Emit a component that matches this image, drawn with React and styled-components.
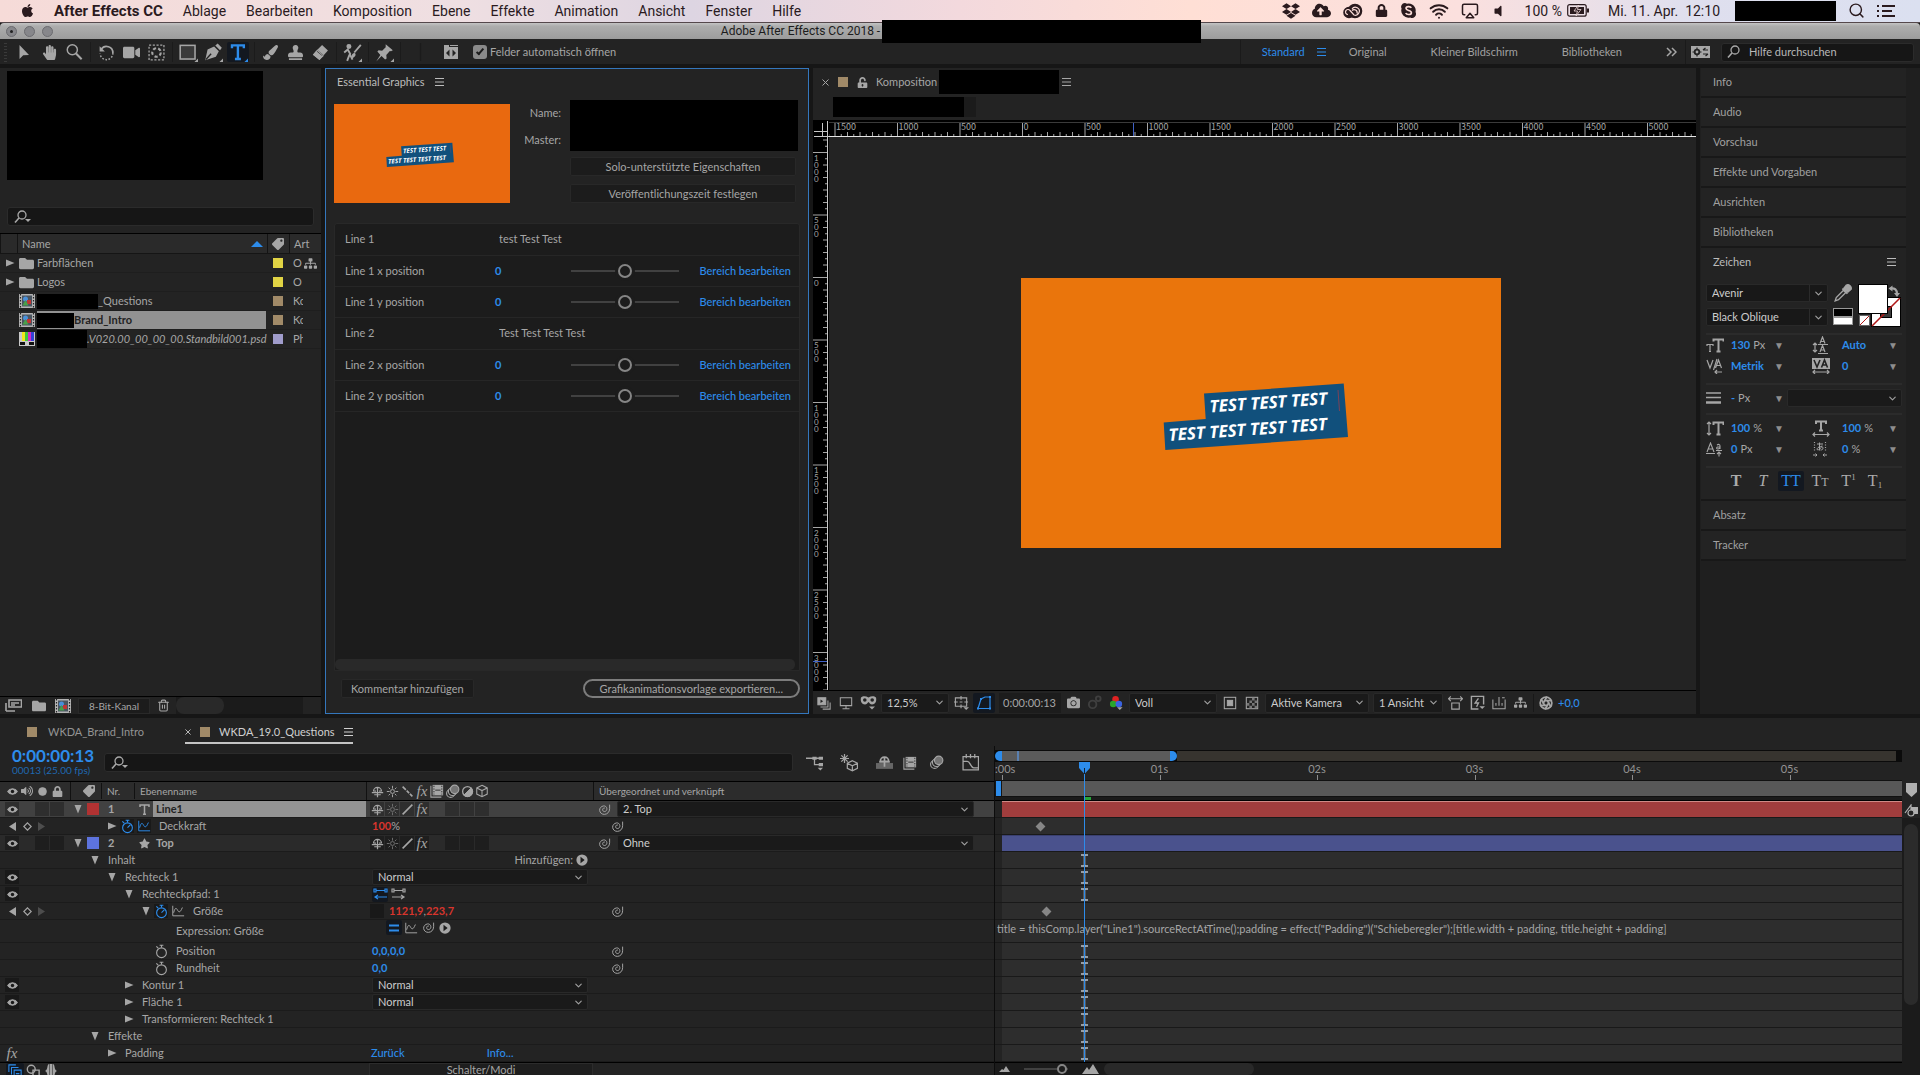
import React from 'react';
import styled, { createGlobalStyle, css } from 'styled-components';
import {
  FaApple, FaDropbox, FaSkype, FaLock, FaUnlockAlt, FaVolumeUp, FaVolumeOff, FaTag, FaFolder,
  FaPaintBrush, FaEraser, FaHandPaper, FaCamera, FaStar, FaCloudUploadAlt,
  FaSitemap, FaStamp, FaVideo,
} from 'react-icons/fa';
import { ChevronDown, Search, Wifi, Airplay, Trash2, Aperture } from 'lucide-react';

const UI = 'Lato, "Open Sans", sans-serif';
const MAC = 'Roboto, "Liberation Sans", sans-serif';
const BLUE = '#2d8ceb';

const GlobalStyle = createGlobalStyle`
  *, *::before, *::after {
    box-sizing: border-box;
  }

  body {
    margin: 0;
    background: #161616;
    overflow: hidden;
  }

  button, input, select {
    font: inherit;
    color: inherit;
    margin: 0;
    padding: 0;
    border: none;
    background: none;
    outline: none;
  }

  svg {
    display: block;
    flex: none;
  }
`;

/* ---------- drawings ---------- */

const Glyph = ({ size = 16, w, h, box = '0 0 16 16', children, ...rest }) => (
  <svg
    width={w || size}
    height={h || size}
    viewBox={box}
    fill="none"
    stroke="currentColor"
    strokeWidth="1.2"
    aria-hidden="true"
    {...rest}
  >
    {children}
  </svg>
);

const Burger = () => (
  <Glyph w={9} h={8} box="0 0 9 8">
    <path d="M0 .5h9M0 4h9M0 7.5h9" strokeWidth="1" />
  </Glyph>
);

const Spiral = ({ size = 13 }) => (
  <Glyph size={size}>
    <path d="M8.500 6.300c-1.200-.6-2.800.3-2.800 2 0 1.500 1.200 2.300 2.500 2.200 1.800-.2 2.900-1.800 2.700-3.600C10.700 4.700 8.800 3.300 6.800 3.600 4 4 1.800 6.300 2 9c.2 3 2.900 5.200 6 5 3.600-.2 6.300-3 6.300-7V2" strokeWidth="1.200" />
  </Glyph>
);

const Stopwatch = () => (
  <Glyph size={15}>
    <circle cx="8" cy="9.300" r="5.200" />
    <path d="M6 1.300h4M8 1.300v2.500M2.500 2.500l2 2" />
  </Glyph>
);

const StopwatchOn = () => (
  <Glyph size={15}>
    <circle cx="8" cy="9.300" r="5.200" />
    <path d="M6 1.300h4M8 1.300v2.500M2.500 2.500l2 2M8 9.300l3-3" />
  </Glyph>
);

const Graph = () => (
  <Glyph size={14}>
    <path d="M2 2v11.500h13M3 10c1.500-6 3-6 4.500-3s3 3 5.500-3" strokeWidth="1.100" />
  </Glyph>
);

const Eye = () => (
  <Glyph w={11} h={9} box="0 0 12 10">
    <path d="M.7 5C3.200 1 8.800 1 11.300 5 8.800 9 3.200 9 .7 5z" fill="currentColor" />
    <circle cx="6" cy="5" r="1.900" fill="#1a1a1a" stroke="none" />
  </Glyph>
);

const Shy = () => (
  <Glyph size={13}>
    <path d="M3 8a5 5 0 0 1 10 0M1 9.500h14M8 3v12M5 6.500v3M11 6.500v3M4 12h8" strokeWidth="1.500" />
  </Glyph>
);

const Sun = () => (
  <Glyph size={13}>
    <circle cx="8" cy="8" r="2.400" />
    <path d="M8 1v3.500M8 11.500V15M1 8h3.500M11.500 8H15M3.200 3.200l2 2M10.800 10.800l2 2M12.800 3.200l-2 2M5.200 10.800l-2 2" />
  </Glyph>
);

const Slash = () => (
  <Glyph size={13}>
    <path d="M2 14L14 2" strokeWidth="2" />
  </Glyph>
);

const Dashes = () => (
  <Glyph size={13}>
    <path d="M2 2l4 4M7 7l3 3M11 11l3 3" strokeWidth="2" />
  </Glyph>
);

const Film = () => (
  <Glyph size={14}>
    <path d="M1 2v13h12" />
    <rect x="3" y="1" width="12" height="12" fill="currentColor" stroke="none" />
    <path d="M4.500 2v10M13.500 2v10" stroke="#232323" strokeWidth="1" strokeDasharray="1.500 1.500" />
    <path d="M6 7h6" stroke="#232323" strokeWidth="1" />
  </Glyph>
);

const Blur = () => (
  <Glyph size={15}>
    <circle cx="6" cy="10" r="4.300" />
    <circle cx="8" cy="8" r="4.300" fill="#232323" />
    <circle cx="10.300" cy="5.700" r="4.500" fill="#757575" />
  </Glyph>
);

const HalfCircle = () => (
  <Glyph size={13}>
    <circle cx="8" cy="8" r="6" strokeWidth="1.600" />
    <path d="M3.500 12.500l9-9a6.300 6.300 0 0 1-9 9z" fill="currentColor" />
  </Glyph>
);

const Cube = () => (
  <Glyph size={14}>
    <path d="M8 1.500l6 3v7l-6 3-6-3v-7zM2 4.500l6 3 6-3M8 7.500v7" />
  </Glyph>
);

const PlayDot = () => (
  <Glyph size={12}>
    <circle cx="8" cy="8" r="7.500" fill="currentColor" stroke="none" />
    <path d="M6 3.800v8.400L11.500 8z" fill="#1c1c1c" stroke="none" />
  </Glyph>
);

const Tri = ({ open }) => (
  <Glyph w={10} h={10} box="0 0 10 10">
    <path d={open ? 'M1.500 1h7L5 9.500z' : 'M1 1.500v7L9.500 5z'} fill="currentColor" stroke="none" />
  </Glyph>
);

const CompIcon = () => (
  <Glyph w={16} h={14} box="0 0 16 14">
    <rect width="16" height="14" fill="#b4b4b4" stroke="none" />
    <path d="M1.500 0v14M14.500 0v14" stroke="#222" strokeDasharray="1.500 1.500" />
    <rect x="3" y="1.500" width="10" height="11" fill="#4a5560" stroke="none" />
    <circle cx="6.500" cy="5" r="2.500" fill="#4a8fd8" stroke="none" />
    <rect x="8" y="6" width="4" height="4" fill="#c03434" stroke="none" />
    <path d="M6.500 6l3 5.500h-6z" fill="#49a04a" stroke="none" />
  </Glyph>
);

const BarsIcon = () => (
  <Glyph w={16} h={14} box="0 0 16 14" stroke="none">
    <rect width="16" height="14" fill="#c8c8c8" />
    <rect x="3" width="3" height="9" fill="#f1e51b" />
    <rect x="6" width="3" height="9" fill="#3fc63f" />
    <rect x="9" width="3" height="9" fill="#d529c9" />
    <rect x="12" width="3" height="9" fill="#3442d6" />
    <rect x="1" y="10" width="5" height="3" fill="#111" />
    <rect x="10" y="10" width="5" height="3" fill="#111" />
  </Glyph>
);

const Magnifier = ({ caret }) => (
  <Glyph w={18} h={14} box="0 0 18 14">
    <circle cx="8" cy="5" r="4" strokeWidth="1.300" />
    <path d="M5 8l-4 4.500" strokeWidth="1.600" />
    {caret && <path d="M11 9h6l-3 3z" fill="currentColor" stroke="none" />}
  </Glyph>
);

const Interpret = () => (
  <Glyph w={17} h={13} box="0 0 17 13">
    <path d="M4 1h12.500v7H4zM1 4v8M1 12h9M6 4h8M6 6h4" strokeWidth="1.600" />
  </Glyph>
);

const Artwork = () => (
  <svg width="100%" height="100%" viewBox="0 0 480 270" role="img" aria-label="Vorschau">
    <path d="M183 115.500L322.700 105.500 327 159 144.300 172 142.700 144.500 184.700 141z" fill="#11507c" />
    <g fill="#fff" fontFamily='"Noto Sans", sans-serif' fontWeight="700" fontStyle="italic" fontSize="17">
      <text transform="translate(189 134.500) rotate(-4)">TEST TEST TEST</text>
      <text transform="translate(148 163) rotate(-4)">TEST TEST TEST TEST</text>
    </g>
    <path d="M317 112l1.500 21" stroke="#7b4257" strokeWidth="1" />
  </svg>
);

const HorizontalRuler = () => {
  const zero = 193.5;
  const ticks = Array.from({ length: 140 }, (_, i) => i - 31);
  return (
    <svg width="100%" height="16" fontFamily='"Noto Sans CJK SC", sans-serif' fontSize="9" fill="#a6a6a6">
      <path d="M0 1.500h2000" stroke="#3a3a3a" />
      {ticks.map((i) => (
        <path
          key={i}
          d={`M${zero + i * 6.25} 16v-${i % 10 === 0 ? 14 : i % 2 === 0 ? 5 : 3}`}
          stroke="#a6a6a6"
        />
      ))}
      {ticks.filter((i) => i % 10 === 0).map((i) => (
        <text key={i} x={zero + 1 + i * 6.25} y="9">{Math.abs(i * 50)}</text>
      ))}
      <path d="M304.500 2v14" stroke="#3f61c8" />
      <path d="M0 15.500h2000" stroke="#e6e6e6" />
    </svg>
  );
};

const VerticalRuler = () => {
  const zero = 140.5;
  const ticks = Array.from({ length: 92 }, (_, i) => i - 22);
  return (
    <svg width="16" height="100%" fontFamily={UI} fontSize="8" fill="#a6a6a6">
      {ticks.map((i) => (
        <path
          key={i}
          d={`M15 ${zero + i * 6.25}h-${i % 10 === 0 ? 15 : i % 2 === 0 ? 5 : 3}`}
          stroke="#a6a6a6"
        />
      ))}
      {ticks.filter((i) => i % 10 === 0).map((i) => (
        <text key={i}>
          {String(Math.abs(i * 50)).split('').map((digit, n) => (
            <tspan key={n} x="1" y={zero + 8 + i * 6.25 + n * 7}>{digit}</tspan>
          ))}
        </text>
      ))}
      <path d="M0 524.500h15" stroke="#3f61c8" />
      <path d="M14.500 0v2000" stroke="#c9c9c9" />
    </svg>
  );
};

/* ---------- shared parts ---------- */

const Screen = styled.div`
  height: 100vh;
  display: flex;
  flex-direction: column;
  background: #161616;
  color: #a6a6a6;
  font-family: ${UI};
  font-size: 11px;
  line-height: 16px;
  white-space: nowrap;
`;

const Redacted = styled.span`
  display: block;
  flex: none;
  background: #000;
  width: ${(p) => p.$w}px;
  height: ${(p) => p.$h}px;
`;

const Swatch = styled.span`
  display: block;
  flex: none;
  width: ${(p) => p.$size || 10}px;
  height: ${(p) => p.$size || 10}px;
  background: ${(p) => p.$color};
`;

const SearchBox = styled.label`
  display: flex;
  align-items: center;
  gap: 4px;
  height: 19px;
  padding: 0 6px;
  color: #a8a8a8;
  background: #161616;
  border: 1px solid #2b2b2b;
  border-radius: 3px;

  input {
    flex: 1;
    min-width: 0;
  }

  input::placeholder {
    color: #b8b8b8;
    opacity: 1;
  }
`;

const IconButton = styled.button`
  display: flex;
  flex: none;
  align-items: center;
  justify-content: center;
  width: ${(p) => p.$w || 22}px;
  height: ${(p) => p.$h || 20}px;
  color: ${(p) => (p.$active ? BLUE : 'inherit')};
  background: ${(p) => (p.$active ? '#131820' : 'none')};
  border-radius: 2px;
`;

const HotText = styled.button`
  color: ${(p) => (p.$expression ? '#d8352d' : BLUE)};
  font-weight: ${(p) => (p.$strong ? 700 : 500)};
  text-align: left;
`;

const SelectWrap = styled.span`
  display: flex;
  flex: ${(p) => (p.$w ? 'none' : 1)};
  align-items: center;
  width: ${(p) => (p.$w ? `${p.$w}px` : 'auto')};
  height: ${(p) => p.$h || 18}px;
  padding-right: 3px;
  color: #cccccc;
  background: ${(p) => (p.$split
    ? 'linear-gradient(#2b2b2b, #2b2b2b) calc(100% - 17px) 0 / 1px 100% no-repeat #181818'
    : '#1a1a1a')};
  border: 1px solid #292929;
  border-radius: 2px;

  select {
    flex: 1;
    min-width: 0;
    height: 100%;
    padding-left: 5px;
    appearance: none;
    line-height: 14px;
  }
`;

const Select = ({ label, value, w, h, split }) => (
  <SelectWrap $w={w} $h={h} $split={split}>
    <select aria-label={label} defaultValue={value}>
      <option value={value}>{value}</option>
    </select>
    <ChevronDown size={11} color="#a0a0a0" strokeWidth={2.5} />
  </SelectWrap>
);

/* ---------- system menu and window title ---------- */

const MenuBar = styled.header`
  display: flex;
  align-items: center;
  flex: none;
  height: 23px;
  padding: 0 25px 1px 20px;
  color: #2a1a1e;
  font-family: ${MAC};
  font-size: 14px;
  border-bottom: 1px solid #55484c;
  background: linear-gradient(90deg, #f6dbd8 0%, #efdfe2 24%, #ddd5e2 36%, #f3d9dd 50%, #ffdfd5 62%, #fbe0de 76%, #dfdfee 88%, #dbe0f0 100%);
`;

const MenuList = styled.nav`
  display: flex;
  gap: 20px;
  flex: 1;
  margin-left: 19px;
`;

const MenuLink = styled.a`
  color: inherit;
  text-decoration: none;
  font-size: ${(p) => (p.$app ? 15 : 14)}px;
  font-weight: ${(p) => (p.$app ? 700 : 400)};
`;

const StatusIcons = styled.div`
  display: flex;
  align-items: center;
  gap: 12px;
`;

const Battery = styled.span`
  display: flex;
  align-items: center;
  gap: 5px;
  margin-left: 8px;
`;

const Clock = styled.span`
  margin: 0 3px 0 6px;
  white-space: pre;
`;

const TitleBar = styled.div`
  position: relative;
  display: flex;
  align-items: center;
  flex: none;
  height: 16px;
  padding-left: 6px;
  background: linear-gradient(#c4c4c4, #adadad 20%, #9c9c9c);
  border-radius: 4px 4px 0 0;
`;

const TrafficLight = styled.button`
  display: flex;
  align-items: center;
  justify-content: center;
  width: 11px;
  height: 11px;
  margin-right: 7px;
  border: 1px solid #6c6c70;
  border-radius: 50%;
  background: #87878b;

  &:first-child::after {
    content: '';
    width: 3px;
    height: 3px;
    border-radius: 50%;
    background: #222;
  }
`;

const WindowTitle = styled.div`
  display: flex;
  flex: 1;
  justify-content: center;
  align-items: center;
  height: 16px;
  color: #1c1c1c;
  font-family: ${MAC};
  font-size: 12px;
  gap: 2px;
  margin-right: 58px;
`;

const TitleRedaction = styled(Redacted)`
  position: relative;
  z-index: 2;
`;

/* ---------- toolbar ---------- */

const Toolbar = styled.div`
  display: flex;
  align-items: center;
  flex: none;
  height: 25px;
  padding: 1px 6px 0 4px;
  background: #232323;
  color: #a6a6a6;
`;

const Grip = styled.span`
  width: 3px;
  height: 19px;
  margin-right: 2px;
  background: repeating-linear-gradient(#3a3a3a 0 1px, transparent 1px 3px);
`;

const ToolGroup = styled.div`
  display: flex;
  gap: 3px;
  padding: 0 5px 0 4px;
  border-right: 1px solid #1b1b1b;
`;

const AutoOpen = styled.label`
  display: flex;
  align-items: center;
  gap: 3px;
  flex: 1;
  margin-left: 12px;

  input {
    display: grid;
    place-items: center;
    width: 14px;
    height: 14px;
    appearance: none;
    background: #8a8a8a;
    border-radius: 3px;
  }

  input:checked::after {
    content: '';
    width: 4px;
    height: 8px;
    margin-bottom: 2px;
    border: solid #1c1c1c;
    border-width: 0 2px 2px 0;
    transform: rotate(40deg);
  }
`;

const Workspaces = styled.nav`
  display: flex;
  align-items: center;
  gap: 44px;
  height: 24px;
  padding: 0 9px 0 21px;
  border-left: 1px solid #1a1a1a;
  border-right: 1px solid #1a1a1a;
`;

const Workspace = styled.button`
  display: flex;
  align-items: center;
  gap: 12px;
  margin-right: ${(p) => (p.$active ? '-21px' : 0)};
  color: ${(p) => (p.$active ? BLUE : '#a0a0a0')};
`;

const HelpSearch = styled(SearchBox)`
  width: 193px;
  margin-left: 6px;
  padding: 0 5px;
  gap: 4px;
`;

/* ---------- panels ---------- */

const Panels = styled.main`
  display: grid;
  grid-template-columns: 321px 484px minmax(0, 1fr) 220px;
  gap: 0 4px;
  flex: 1;
  min-height: 0;
  padding: 4px 0;
`;

const Panel = styled.section`
  display: flex;
  flex-direction: column;
  min-width: 0;
  min-height: 0;
  background: #232323;
`;

const ProjectTop = styled.div`
  padding: 3px 7px 7px;

  ${SearchBox} {
    margin-top: 27px;
  }
`;

const ProjectTable = styled.table`
  width: 100%;
  table-layout: fixed;
  border-collapse: collapse;

  th {
    height: 20px;
    padding: 0 0 0 5px;
    text-align: left;
    font-weight: 400;
    background: #2a2a2a;
    border-top: 1px solid #000;
    border-bottom: 1px solid #151515;
    box-shadow: inset 1px 0 #141414;
  }

  td {
    height: 19px;
    padding: 0;
    overflow: hidden;
    border-bottom: 1px solid #1e1e1e;
  }
`;

const HeadCell = styled.span`
  display: flex;
  align-items: center;
  justify-content: space-between;
  padding-right: 4px;
`;

const ItemName = styled.span`
  display: flex;
  align-items: center;
  gap: ${(p) => (p.$folder ? 3 : 2)}px;
  height: 18px;
  padding-left: 2px;
`;

const ItemLabel = styled.span`
  display: flex;
  flex: 1;
  align-items: center;
  height: 18px;
  margin-right: 1px;
  font-style: ${(p) => (p.$italic ? 'italic' : 'normal')};
  ${(p) => p.$selected && css`
    background: #929292;
    color: #232323;
    font-weight: 700;
  `}
`;

const KindCell = styled.span`
  display: flex;
  align-items: center;
  gap: 2px;
  width: ${(p) => (p.$wide ? 28 : 10)}px;
  padding-left: ${(p) => (p.$wide ? 4 : 0)}px;
  margin-left: ${(p) => (p.$wide ? 0 : 4)}px;
  overflow: hidden;
`;

const PanelFooter = styled.footer`
  display: flex;
  align-items: center;
  flex: none;
  height: ${(p) => p.$h}px;
  margin-top: auto;
  border-top: 1px solid #000;
  color: #a6a6a6;
`;

const DepthButton = styled.button`
  width: 72px;
  height: 16px;
  margin-left: 2px;
  font-size: 10px;
  line-height: 14px;
  background: #1c1c1c;
  border: 1px solid #292929;
`;

const ScrollTrack = styled.span`
  flex: ${(p) => (p.$w ? 'none' : 1)};
  width: ${(p) => (p.$w ? `${p.$w}px` : 'auto')};
  height: 100%;
  background: #1b1b1b;

  &::before {
    content: '';
    display: block;
    width: ${(p) => p.$thumb}px;
    height: 100%;
    border-radius: 8px;
    background: #292929;
  }
`;

const FocusedPanel = styled(Panel)`
  border: 1px solid #3477bd;
  padding: 0 8px;
`;

const PanelTitle = styled.h2`
  display: flex;
  align-items: center;
  gap: 10px;
  margin: 0;
  height: 26px;
  padding-left: 3px;
  color: #bcbcbc;
  font-size: 11px;
  font-weight: 400;
`;

const TemplateHead = styled.div`
  display: grid;
  grid-template-columns: 176px 1fr 228px;
  gap: 0 9px;
  padding: 5px 2px 0 0;
  height: 114px;
`;

const Thumbnail = styled.div`
  height: 99px;
  margin-top: 4px;
  background: #e9690f;
`;

const FieldLabels = styled.div`
  display: flex;
  flex-direction: column;
  align-items: flex-end;
  gap: 11px;
  padding-top: 5px;
`;

const FieldStack = styled.div`
  display: flex;
  flex-direction: column;
  gap: 8px;

  ${Redacted} {
    margin-bottom: -2px;
  }
`;

const FlatButton = styled.button`
  height: 19px;
  padding: 0 9px;
  line-height: 16px;
  color: #a6a6a6;
  background: #1c1c1c;
  border: 1px solid #282828;
  border-radius: 2px;
  margin-right: ${(p) => (p.$inset ? 2 : 0)}px;
`;

const PropertyList = styled.div`
  display: flex;
  flex-direction: column;
  flex: 1;
  margin-top: 14px;
  background: #1c1c1c;
  border: 1px solid #282828;
  border-radius: 3px 3px 0 0;
`;

const Property = styled.div`
  display: grid;
  grid-template-columns: 150px 76px 108px 1fr;
  align-items: center;
  height: ${(p) => (p.$text ? 32 : 31)}px;
  padding: 0 8px ${(p) => (p.$text ? 2 : 0)}px 10px;
  border-bottom: 1px solid #262626;

  > button:last-child {
    justify-self: end;
  }
`;

const TextField = styled.input`
  grid-column: 2 / 4;
  padding-left: 4px;
`;

const Slider = styled.input.attrs({ type: 'range' })`
  width: ${(p) => p.$w}px;
  height: ${(p) => p.$thumb + 2}px;
  appearance: none;

  &::-webkit-slider-runnable-track {
    height: 2px;
    background: #414141;
  }

  &::-webkit-slider-thumb {
    appearance: none;
    width: ${(p) => p.$thumb}px;
    height: ${(p) => p.$thumb}px;
    margin-top: ${(p) => 1 - p.$thumb / 2}px;
    border: 2px solid #858585;
    border-radius: 50%;
    background: #1c1c1c;
    box-shadow: 0 0 0 ${(p) => (p.$thumb > 10 ? 3 : 0)}px #1c1c1c;
  }
`;

const ListScroll = styled.span`
  height: 11px;
  margin: auto 4px 0 0;
  border-radius: 5px;
  background: #292929;
`;

const TemplateActions = styled.div`
  display: flex;
  justify-content: space-between;
  align-items: center;
  padding: 8px 0 15px 7px;
`;

const PillButton = styled.button`
  height: 19px;
  padding: 0 15px;
  line-height: 15px;
  color: #a6a6a6;
  border: 2px solid #7c7c7c;
  border-radius: 10px;
`;

/* ---------- composition viewer ---------- */

const CompHead = styled.div`
  display: flex;
  align-items: center;
  height: 28px;
  padding: 0 9px;

  > * {
    margin-right: 3px;
  }

  ${Swatch} {
    margin: 0 9px 0 6px;
  }

  > span {
    margin-left: 5px;
  }

  > ${Redacted} {
    margin-left: -1px;
  }
`;

const Breadcrumb = styled.div`
  display: flex;
  height: 24px;
  padding: 1px 20px 3px;

  &::after {
    content: '';
    width: 12px;
    background: #1b1b1b;
  }
`;

const Viewer = styled.div`
  display: grid;
  grid-template: 16px minmax(0, 1fr) / 16px minmax(0, 1fr);
  flex: 1;
  min-height: 0;
  overflow: hidden;
  border-top: 1px solid #000;
`;

const RulerStrip = styled.div`
  min-width: 0;
  min-height: 0;
  overflow: hidden;
  background: #000;
`;

const Stage = styled.div`
  display: flex;
  align-items: center;
  justify-content: center;
  padding: 0 3px 2px 0;
  overflow: hidden;
`;

const Frame = styled.div`
  width: 480px;
  height: 270px;
  background: #ea750c;
`;

const CompFooter = styled(PanelFooter)`
  gap: 4px;
  padding: 0 2px;
`;

const TimeReadout = styled.span`
  width: 62px;
  padding-left: 4px;
  line-height: 20px;
  background: #1c1c1c;
`;

const Divider = styled.span`
  width: 1px;
  height: 18px;
  background: #181818;
`;

/* ---------- right column ---------- */

const SideColumn = styled.aside`
  padding: 0 14px 0 1px;
  background: #1f1f1f;
  min-height: 0;
`;

const Drawer = styled.h2`
  display: flex;
  align-items: center;
  justify-content: space-between;
  margin: 0;
  height: 30px;
  padding: 0 10px ${(p) => (p.$open ? 3 : 1)}px 12px;
  font-size: 11px;
  font-weight: 400;
  color: ${(p) => (p.$open ? '#bcbcbc' : '#a0a0a0')};
  background: #232323;
  border-bottom: ${(p) => (p.$open ? 'none' : '2px solid #181818')};
`;

const CharacterBody = styled.div`
  padding: 6px 4px 0 5px;
  background: #232323;
  border-bottom: 2px solid #181818;
`;

const FontPickers = styled.div`
  display: grid;
  grid-template-columns: 122px 20px 44px;
  gap: 6px 5px;
  height: 49px;
`;

const PickerColumn = styled.div`
  display: flex;
  flex-direction: column;
  align-items: center;
  gap: 6px;
`;

const MetricGrid = styled.div`
  display: grid;
  grid-template-columns: 25px 37px 44px 30px 37px 1fr;
  grid-auto-rows: 16px;
  align-items: center;
  row-gap: 5px;
  padding: ${(p) => p.$top}px 3px 9px 0;
  border-top: 2px solid #2b2b2b;
`;

const Unit = styled.span`
  display: flex;
  gap: 3px;
`;

const Caret = styled.button`
  width: 12px;
  justify-self: ${(p) => (p.$end ? 'end' : 'start')};
  margin-left: ${(p) => (p.$end ? 0 : 5)}px;
  font-size: 10px;
  color: #8e8e8e;
`;

const StrokeRow = styled.div`
  display: grid;
  grid-template-columns: 25px 37px 19px 1fr;
  align-items: center;
  height: 30px;
  padding-bottom: 2px;
  border-top: 2px solid #2b2b2b;
`;

const StyleRow = styled.div`
  display: flex;
  justify-content: center;
  gap: 3px;
  height: 33px;
  padding: 3px 0 0 2px;
  border-top: 2px solid #2b2b2b;
`;

const StyleButton = styled(IconButton)`
  font-family: "Liberation Serif", serif;
  font-size: 16px;
  font-weight: ${(p) => (p.$light ? 400 : 700)};
  font-style: ${(p) => (p.$italic ? 'italic' : 'normal')};
  color: ${(p) => (p.$active ? BLUE : '#ababab')};

  small {
    font-size: ${(p) => (p.$script ? 9 : 12)}px;
    align-self: ${(p) => p.$script || 'flex-end'};
    line-height: ${(p) => (p.$script ? 12 : 18)}px;
  }
`;

/* ---------- timeline ---------- */

const TimelinePanel = styled.section`
  display: flex;
  flex-direction: column;
  flex: none;
  background: #232323;
`;

const Tabs = styled.div`
  display: flex;
  height: 28px;
  padding-left: 27px;
  gap: 41px;
`;

const Tab = styled.button`
  display: flex;
  align-items: center;
  gap: ${(p) => (p.$active ? 9 : 11)}px;
  height: 26px;
  padding-top: 3px;
  color: ${(p) => (p.$active ? '#d0d0d0' : '#949494')};
  border-bottom: 2px solid ${(p) => (p.$active ? '#c4c4c4' : 'transparent')};
`;

const TimelineBody = styled.div`
  display: grid;
  grid-template-columns: 995px minmax(0, 1fr) 18px;
`;

const LayerPane = styled.div`
  border-right: 1px solid #0c0c0c;
`;

const LayerTools = styled.div`
  display: flex;
  align-items: center;
  height: 35px;
  padding: 0 12px 2px 12px;
  color: #a6a6a6;

  ${SearchBox} {
    flex: 1;
    margin: 0 8px 0 13px;
  }
`;

const CurrentTime = styled.div`
  width: 79px;
  color: ${BLUE};
  font-size: 17px;
  font-weight: 700;
  line-height: 16px;

  small {
    display: block;
    color: #1f68b0;
    font-size: 10px;
    font-weight: 400;
    line-height: 13px;
  }
`;

const ToolIcons = styled.div`
  display: flex;
  gap: ${(p) => p.$gap || 0}px;
`;

const rowGrid = css`
  display: grid;
  grid-template-columns: 70px 296px 227px 1fr;
  align-items: stretch;
`;

const ColumnHead = styled.div`
  ${rowGrid}
  height: 20px;
  font-size: 10px;
  color: #a6a6a6;
  background: #2c2c2c;
  border-top: 1px solid #000;
  border-bottom: 1px solid #000;

  > * + * {
    box-shadow: inset 1px 0 #111;
  }
`;

const Flags = styled.span`
  display: flex;
  align-items: center;
  gap: 1px;
  padding-left: 5px;
`;

const Cell = styled.span`
  display: flex;
  align-items: center;
  justify-content: center;
  flex: none;
  width: 14px;
  height: 14px;
  color: ${(p) => p.$color || '#a6a6a6'};
  background: ${(p) => (p.$box ? 'rgba(0, 0, 0, 0.28)' : 'none')};
`;

const HeadOutline = styled.span`
  display: grid;
  grid-template-columns: 31px 33px 1fr;
  align-items: center;

  > svg {
    margin-left: 13px;
  }

  > span {
    padding-left: 6px;
    box-shadow: inset 1px 0 #111;
  }
`;

const ParentHead = styled.span`
  padding-left: 6px;
  line-height: 18px;
`;

const LayerRow = styled.div`
  ${rowGrid}
  height: ${(p) => (p.$tall ? 23 : 17)}px;
  border-bottom: 1px solid #1b1b1b;
  background: ${(p) => (p.$selected ? '#414141' : p.$layer ? '#2a2a2a' : '#232323')};
`;

const Outline = styled.span`
  display: flex;
  align-items: center;
  padding-left: ${(p) => 3 + p.$level * 17}px;
`;

const OutlineName = styled.span`
  padding-left: ${(p) => p.$gap}px;
`;

const Animators = styled.span`
  display: flex;
  gap: 3px;
  margin-left: ${(p) => (p.$leaf ? 13 : 3)}px;
`;

const LayerNumber = styled.span`
  width: 31px;
  margin-left: 9px;
  font-weight: 700;
`;

const LayerName = styled.span`
  flex: 1;
  height: 16px;
  margin-left: 3px;
  padding-left: 3px;
  font-weight: 700;
  ${(p) => p.$selected && css`
    color: #232323;
    background: #939393;
  `}
`;

const Values = styled.span`
  display: flex;
  align-items: ${(p) => (p.$top ? 'flex-start' : 'center')};
  gap: ${(p) => p.$gap || 0}px;
  padding-left: ${(p) => p.$pad || 6}px;
  padding-right: 5px;
`;

const AddMenu = styled.button`
  display: flex;
  align-items: center;
  gap: 3px;
  margin-left: auto;
`;

const Parent = styled.span`
  display: flex;
  align-items: center;
  gap: 6px;
  padding: 0 20px 0 ${(p) => (p.$layer ? 5 : 18)}px;
`;

const LayerFooter = styled.div`
  display: flex;
  align-items: flex-start;
  height: 13px;
  padding-left: 6px;
  overflow: hidden;
  border-top: 1px solid #000;
  color: #a6a6a6;
`;

const ModeButton = styled.button`
  width: 224px;
  height: 16px;
  margin-left: 309px;
  padding-bottom: 2px;
  line-height: 12px;
  background: #1e1e1e;
  border: 1px solid #2c2c2c;
`;

const TrackPane = styled.div`
  position: relative;
  padding-top: 4px;
  overflow: hidden;
`;

const Navigator = styled.div`
  display: flex;
  height: 12px;
  padding: 1px 6px 1px 0;
  background: #0b0b0b;
`;

const NavHandle = styled.span`
  width: 7px;
  background: ${BLUE};
  border-radius: ${(p) => (p.$end ? '0 5px 5px 0' : '5px 0 0 5px')};
`;

const NavRange = styled.span`
  width: 18.6%;
  background: linear-gradient(90deg, transparent 15px, #5a80b0 15px 17px, transparent 17px) #5b5b5b;
`;

const NavRest = styled.span`
  flex: 1;
  background: #37342f;
`;

const TimeScale = styled.div`
  display: flex;
  height: 18px;
  padding-left: 7px;
  line-height: 13px;
  color: #949494;
`;

const TimeMark = styled.span`
  position: relative;
  flex: 0 0 17.5%;

  span {
    display: inline-block;
    width: 40px;
    margin-left: -20px;
    text-align: center;
  }

  &::after {
    content: '';
    position: absolute;
    left: 0;
    bottom: 0;
    width: 1px;
    height: 5px;
    background: #8c8c8c;
  }
`;

const WorkArea = styled.div`
  height: 17px;
  border: solid #111;
  border-width: 1px 0;
  background: linear-gradient(90deg, #161616 1px, ${BLUE} 1px 6px, #161616 6px 7px, #585858 7px);
`;

const CacheBar = styled.div`
  height: 4px;
  border-bottom: 1px solid #000;
  background: linear-gradient(90deg, transparent 90px, #25a53a 90px 96px, transparent 96px) #1b1b1b;
`;

const Track = styled.div`
  display: flex;
  align-items: center;
  height: ${(p) => (p.$tall ? 23 : 17)}px;
  padding: ${(p) => (p.$tall ? '0 0 4px 2px' : '0 0 0 7px')};
  border-bottom: 1px solid #191919;
  background: linear-gradient(90deg, #232323 7px, #2d2d2d 7px);
`;

const Clip = styled.span`
  flex: 1;
  height: 16px;
  background: ${(p) => p.$color};
  border-top: 1px solid ${(p) => p.$edge};
`;

const Keyframe = styled.span`
  width: 7px;
  height: 7px;
  margin-left: ${(p) => p.$at}px;
  background: #868686;
  transform: rotate(45deg);
`;

const BeamMark = styled.span`
  margin-left: 77px;
`;

const Playhead = styled.span`
  position: absolute;
  top: 16px;
  bottom: 13px;
  left: 84px;
  width: 11px;
  background: linear-gradient(90deg, transparent 5px, ${BLUE} 5px 6px, transparent 6px);
`;

const TrackFooter = styled.div`
  display: flex;
  align-items: center;
  gap: 5px;
  height: 13px;
  padding-left: 4px;
  color: #a6a6a6;
  background: #1b1b1b;
  border-top: 1px solid #000;
`;

const ZoomGroup = styled.span`
  display: flex;
  align-items: center;
  gap: 14px;
`;

const EdgeStrip = styled.div`
  display: flex;
  flex-direction: column;
  align-items: center;
  gap: 7px;
  padding-top: 37px;
  background: linear-gradient(#232323 72px, #1b1b1b 72px);
  color: #b0b0b0;

  &::after {
    content: '';
    width: 14px;
    height: 181px;
    border-radius: 7px;
    background: #2b2b2b;
  }
`;

const Fx = styled.span`
  font-family: "Liberation Serif", serif;
  font-size: 15px;
  font-style: italic;
`;

/* ---------- data ---------- */

const menus = ['Ablage', 'Bearbeiten', 'Komposition', 'Ebene', 'Effekte', 'Animation', 'Ansicht', 'Fenster', 'Hilfe'];

const projectItems = [
  { name: 'Farbflächen', folder: true, color: '#e0d344', kind: 'O', flow: true },
  { name: 'Logos', folder: true, color: '#e0d344', kind: 'O' },
  { name: '_Questions', hidden: 61, hiddenHeight: 15, color: '#a18a68', kind: 'Ko' },
  { name: 'Brand_Intro', hidden: 37, hiddenHeight: 15, color: '#a18a68', kind: 'Ko', selected: true },
  { name: '.V020.00_00_00_00.Standbild001.psd', hidden: 50, hiddenHeight: 18, color: '#a09ccb', kind: 'Ph', psd: true },
];

const properties = [
  { label: 'Line 1', text: 'test Test Test' },
  { label: 'Line 1 x position' },
  { label: 'Line 1 y position' },
  { label: 'Line 2', text: 'Test Test Test Test' },
  { label: 'Line 2 x position' },
  { label: 'Line 2 y position' },
];

const layers = [
  { layer: 1, name: 'Line1', color: '#b13232', parent: '2. Top', selected: true, eye: true, level: 0, open: true, clip: ['#a13d3d', '#cf8a86'] },
  { name: 'Deckkraft', level: 2, open: false, keys: true, watch: 'on', graph: 'on', pick: true, values: 'opacity', keyframe: 35 },
  { layer: 2, name: 'Top', color: '#5d73dd', parent: 'Ohne', eye: true, level: 0, open: true, clip: ['#4a528d', '#3a4070'] },
  { name: 'Inhalt', level: 1, open: true, values: 'add' },
  { name: 'Rechteck 1', level: 2, open: true, eye: true, values: 'mode' },
  { name: 'Rechteckpfad: 1', level: 3, open: true, eye: true, values: 'direction' },
  { name: 'Größe', level: 4, open: true, keys: true, watch: 'on', graph: 'off', pick: true, values: 'size', keyframe: 41 },
  { name: 'Expression: Größe', level: 4, tall: true, indent: 35, values: 'expression' },
  { name: 'Position', level: 4, watch: 'off', pick: true, values: '0,0,0,0' },
  { name: 'Rundheit', level: 4, watch: 'off', pick: true, values: '0,0' },
  { name: 'Kontur 1', level: 3, open: false, eye: true, values: 'mode' },
  { name: 'Fläche 1', level: 3, open: false, eye: true, values: 'mode' },
  { name: 'Transformieren: Rechteck 1', level: 3, open: false },
  { name: 'Effekte', level: 1, open: true },
  { name: 'Padding', level: 2, open: false, fx: true, values: 'reset' },
];

/* ---------- sections ---------- */

const SystemMenu = () => (
  <MenuBar>
    <FaApple size={15} />
    <MenuList>
      <MenuLink href="#app" $app>After Effects CC</MenuLink>
      {menus.map((item) => (
        <MenuLink key={item} href={`#${item}`}>{item}</MenuLink>
      ))}
    </MenuList>
    <StatusIcons>
      <FaDropbox size={18} />
      <FaCloudUploadAlt size={19} />
      <Glyph w={20} h={16} box="0 0 20 16" strokeWidth="1.600">
        <circle cx="12" cy="8" r="6.500" fill="currentColor" />
        <circle cx="6" cy="9.500" r="5" fill="currentColor" />
        <path d="M5 11.500a2.500 2.500 0 1 1 2-4l4 4.500a4 4 0 1 0-2-6M9 7.500a3 3 0 0 1 5 3" stroke="#fbdcd8" strokeWidth="1.200" />
      </Glyph>
      <FaLock size={13} />
      <Glyph size={17}>
        <path d="M4.500 1a3.500 3.500 0 0 0-3 5.200A6.600 6.600 0 0 0 9.600 14.500a3.700 3.700 0 0 0 5-5A6.600 6.600 0 0 0 6.500 1.600 3.500 3.500 0 0 0 4.500 1z" fill="currentColor" stroke="none" />
        <path d="M10.600 5.600C9.800 3.900 5.700 4 5.700 6.200c0 2.300 5 1.300 5 3.800 0 2.300-4.500 2.300-5.300.3" stroke="#fbdcd8" strokeWidth="1.600" />
      </Glyph>
      <Wifi size={20} strokeWidth={2.400} />
      <Airplay size={18} strokeWidth={2} />
      <FaVolumeOff size={14} />
      <Battery>
        100 %
        <Glyph w={23} h={13} box="0 0 23 13">
          <rect x=".7" y=".7" width="18.500" height="11.500" rx="2" />
          <rect x="3" y="3" width="14" height="7" fill="currentColor" stroke="none" />
          <path d="M21 4.500v4" strokeWidth="2" />
          <path d="M11.500 1L7 7h3.500L9 12l5-6.500h-3.500z" fill="currentColor" stroke="#f6dede" strokeWidth=".8" />
        </Glyph>
      </Battery>
      <Clock>Mi. 11. Apr.  12:10</Clock>
      <Redacted $w={101} $h={20} />
      <Search size={17} />
      <Glyph w={18} h={12} box="0 0 18 12">
        <path d="M0 1h2M5 1h13M0 6h2M5 6h10M0 11h2M5 11h13" strokeWidth="2" />
      </Glyph>
    </StatusIcons>
  </MenuBar>
);

/* small corner mark on tools that open a flyout */
const corner = <path d="M13 16h3v-3z" fill="currentColor" stroke="none" />;

const tools = [
  [
    ['Auswahl', <Glyph><path d="M3.500 1v14l3.700-3.800L13 11z" fill="currentColor" stroke="none" /></Glyph>],
    ['Hand', <FaHandPaper size={15} />],
    ['Zoom', <Glyph size={18}><circle cx="6.500" cy="6" r="4.500" strokeWidth="1.300" /><path d="M9.800 9.300l5 5.200" strokeWidth="1.800" /></Glyph>],
  ],
  [
    ['Drehung', <Glyph size={17}><path d="M3 5a6 6 0 0 1 11 3.500" strokeWidth="1.600" /><path d="M14 8.500A6 6 0 0 1 2 9" strokeDasharray="1.500 1.500" strokeWidth="1.400" /><path d="M1.500 2v5h5z" fill="currentColor" stroke="none" /></Glyph>],
    ['Kamera', <FaVideo size={17} />],
    ['Ausschnitt', <Glyph size={17}><rect x="1" y="1" width="14" height="14" strokeDasharray="2 1.500" /><circle cx="8" cy="8" r="4" strokeDasharray="3 2" strokeWidth="2" /></Glyph>],
  ],
  [
    ['Rechteck', <Glyph size={19}><rect x="1" y="2" width="12.500" height="11.500" fill="#3a3a3a" strokeWidth="1.300" />{corner}</Glyph>],
    ['Zeichenstift', <Glyph size={19}><path d="M1 14.500l2-9L8.500 3l4 4L10 11.500zM9.500 2l2-1.500L15 4l-1.500 2z" fill="currentColor" stroke="none" /><path d="M1.500 14l4.500-5" stroke="#232323" />{corner}</Glyph>],
    ['Text', <Glyph size={19}><path d="M2.500 4.500V2h10v2.500M7.500 2v11.500M5 13.500h5" strokeWidth="2" />{corner}</Glyph>, true],
  ],
  [
    ['Pinsel', <FaPaintBrush size={15} />],
    ['Kopierstempel', <FaStamp size={15} />],
    ['Radiergummi', <Glyph size={17}><path d="M9.500 1L15 6l-4 4.500-6-5zM4 6.500l6 5L7 15 1 10z" fill="currentColor" stroke="none" /><path d="M1.500 10L5 6l5.500 5L7 14.500z" strokeWidth="1" /></Glyph>],
  ],
  [
    ['Roto-Pinsel', <Glyph size={19}><circle cx="5" cy="3" r="1.500" fill="currentColor" /><path d="M1 8l3-2.500L6 9l-1 2-1.500 4M6 10l2 4M15 1.500L9.500 8" strokeWidth="1.600" /><path d="M7 13c0-3 1-4.500 3-4.500 1.500 1.500 0 4-3 4.500z" fill="currentColor" stroke="none" />{corner}</Glyph>],
  ],
  [
    ['Marionette', <Glyph size={19}><path d="M9 1l6 5-1.500 1-1-.3L9.500 10l.3 3-1.300.8L5.500 11 1 15.500 4.500 10 2 7.200 3 6.200l3 .3L9 3.500z" fill="currentColor" stroke="none" />{corner}</Glyph>],
  ],
];

const Tools = () => (
  <Toolbar>
    <Grip />
    {tools.map((group, i) => (
      <ToolGroup key={i}>
        {group.map(([name, icon, active]) => (
          <IconButton key={name} aria-label={name} $active={active}>{icon}</IconButton>
        ))}
      </ToolGroup>
    ))}
    <Glyph w={60} h={18} box="0 0 60 18">
      <path d="M19.500 0v18" stroke="#1b1b1b" />
      <path d="M43 2h5v2h9v12H43zM49 2h8v1h-8z" fill="currentColor" stroke="none" />
      <path d="M48.500 6.500v7L45 10zM51.500 6.500v7L55 10z" fill="#232323" stroke="none" />
    </Glyph>
    <AutoOpen>
      <input type="checkbox" defaultChecked />
      Felder automatisch öffnen
    </AutoOpen>
    <Workspaces>
      <Workspace $active>Standard <Burger /></Workspace>
      <Workspace>Original</Workspace>
      <Workspace>Kleiner Bildschirm</Workspace>
      <Workspace>Bibliotheken</Workspace>
      <IconButton $w={10} aria-label="Weitere Arbeitsbereiche">
        <Glyph w={11} h={10} box="0 0 11 10"><path d="M1 1l4 4-4 4M6 1l4 4-4 4" strokeWidth="1.500" /></Glyph>
      </IconButton>
    </Workspaces>
    <IconButton $w={29} aria-label="Einstellungen synchronisieren">
      <Glyph w={19} h={12} box="0 0 19 12">
        <rect width="19" height="12" fill="#a6a6a6" stroke="none" />
        <circle cx="6" cy="6" r="2.300" stroke="#222" strokeWidth="1.800" />
        <path d="M6 1.500v9M1.500 6h9" stroke="#222" strokeDasharray="1.500 6" />
        <path d="M12 4h5M14.500 2L12 4M17 8h-5M14.500 10L17 8" stroke="#222" />
      </Glyph>
    </IconButton>
    <HelpSearch>
      <Magnifier />
      <input aria-label="Hilfe durchsuchen" placeholder="Hilfe durchsuchen" />
    </HelpSearch>
  </Toolbar>
);

const ProjectPanel = () => (
  <Panel>
    <ProjectTop>
      <Redacted $w={256} $h={109} />
      <SearchBox>
        <Magnifier caret />
        <input aria-label="Projekt durchsuchen" />
      </SearchBox>
    </ProjectTop>
    <ProjectTable>
      <colgroup>
        <col width="17" />
        <col width="250" />
        <col width="22" />
        <col />
      </colgroup>
      <thead>
        <tr>
          <th aria-label="Status" />
          <th>
            <HeadCell>
              Name
              <Glyph w={12} h={6} box="0 0 12 6"><path d="M0 6l6-6 6 6z" fill={BLUE} stroke="none" /></Glyph>
            </HeadCell>
          </th>
          <th aria-label="Etikett"><FaTag size={12} transform="scale(-1 1)" /></th>
          <th>Art</th>
        </tr>
      </thead>
      <tbody>
        {projectItems.map((item) => (
          <tr key={item.name}>
            <td>{item.folder && <IconButton $w={19} $h={18} aria-label="Aufklappen"><Tri /></IconButton>}</td>
            <td>
              <ItemName $folder={item.folder}>
                {item.folder ? <FaFolder size={15} /> : item.psd ? <BarsIcon /> : <CompIcon />}
                <ItemLabel $selected={item.selected} $italic={item.psd}>
                  {item.hidden && <Redacted $w={item.hidden} $h={item.hiddenHeight} />}
                  {item.name}
                </ItemLabel>
              </ItemName>
            </td>
            <td><IconButton $w={21} $h={18} aria-label="Etikett"><Swatch $color={item.color} /></IconButton></td>
            <td>
              <KindCell $wide={item.flow}>
                {item.kind}
                {item.flow && <FaSitemap size={13} />}
              </KindCell>
            </td>
          </tr>
        ))}
      </tbody>
    </ProjectTable>
    <PanelFooter $h={18}>
      <IconButton $w={27} $h={16} aria-label="Footage interpretieren"><Interpret /></IconButton>
      <IconButton $w={23} $h={16} aria-label="Neuer Ordner"><FaFolder size={14} /></IconButton>
      <IconButton $w={26} $h={16} aria-label="Neue Komposition"><CompIcon /></IconButton>
      <DepthButton>8-Bit-Kanal</DepthButton>
      <IconButton $w={26} $h={16} aria-label="Löschen"><Trash2 size={13} /></IconButton>
      <ScrollTrack $w={127} $thumb={48} />
    </PanelFooter>
  </Panel>
);

const EssentialGraphics = () => (
  <FocusedPanel>
    <PanelTitle>Essential Graphics <Burger /></PanelTitle>
    <TemplateHead>
      <Thumbnail><Artwork /></Thumbnail>
      <FieldLabels>
        <span>Name:</span>
        <span>Master:</span>
      </FieldLabels>
      <FieldStack>
        <Redacted $w={228} $h={51} />
        <FlatButton $inset>Solo-unterstützte Eigenschaften</FlatButton>
        <FlatButton $inset>Veröffentlichungszeit festlegen</FlatButton>
      </FieldStack>
    </TemplateHead>
    <PropertyList>
      {properties.map(({ label, text }) => (
        <Property key={label} $text={text}>
          <span>{label}</span>
          {text ? (
            <TextField aria-label={label} defaultValue={text} />
          ) : (
            <>
              <HotText $strong aria-label={`${label} Wert`}>0</HotText>
              <Slider $w={108} $thumb={14} aria-label={label} min="-50" max="50" defaultValue="0" />
              <HotText>Bereich bearbeiten</HotText>
            </>
          )}
        </Property>
      ))}
      <ListScroll />
    </PropertyList>
    <TemplateActions>
      <FlatButton>Kommentar hinzufügen</FlatButton>
      <PillButton>Grafikanimationsvorlage exportieren...</PillButton>
    </TemplateActions>
  </FocusedPanel>
);

const CompositionPanel = () => (
  <Panel>
    <CompHead>
      <Glyph w={7} h={7} box="0 0 7 7"><path d="M.5.5l6 6M6.500.5l-6 6" strokeWidth="1" /></Glyph>
      <Swatch $color="#a18a68" />
      <FaUnlockAlt size={11} />
      <span>Komposition</span>
      <Redacted $w={120} $h={24} />
      <Burger />
    </CompHead>
    <Breadcrumb><Redacted $w={131} $h={20} /></Breadcrumb>
    <Viewer>
      <RulerStrip>
        <svg width="16" height="16" stroke="#c9c9c9">
          <path d="M14.500 0v16M9.500 2v14M1 10.500h14M1 15.500h15" />
        </svg>
      </RulerStrip>
      <RulerStrip><HorizontalRuler /></RulerStrip>
      <RulerStrip><VerticalRuler /></RulerStrip>
      <Stage><Frame><Artwork /></Frame></Stage>
    </Viewer>
    <CompFooter $h={24}>
      <IconButton aria-label="Vorschau immer anzeigen" $w={18}>
        <Glyph size={14}><rect x="1" y="2" width="9" height="8" fill="currentColor" /><path d="M12.500 5v7.500H4M15 7.500V15H6.500" /><path d="M4 4v4l3-2z" fill="#222" stroke="none" /></Glyph>
      </IconButton>
      <IconButton aria-label="Primärer Viewer" $w={18}>
        <Glyph size={14}><path d="M1.500 2h13v9h-13zM8 11v3M4 14.500h8" /></Glyph>
      </IconButton>
      <IconButton aria-label="VR-Ansicht" $w={18}>
        <Glyph w={17} h={15} box="0 0 17 15"><path d="M1 2.500C3 .5 6 1 8.500 2.500 11 1 14 .5 16 2.500c1 4-1 7-4 7-1.500 0-2.500-1.500-3.500-2.500-1 1-2 2.500-3.500 2.500-3 0-5-3-4-7z" fill="currentColor" stroke="none" /><circle cx="4.800" cy="5" r="1.800" fill="#232323" stroke="none" /><circle cx="12.200" cy="5" r="1.800" fill="#232323" stroke="none" /><path d="M9 11.500h6l-3 3z" fill="currentColor" stroke="none" /></Glyph>
      </IconButton>
      <Select label="Vergrößerung" value="12,5%" w={68} h={20} />
      <IconButton aria-label="Raster" $w={16}>
        <Glyph w={15} h={15} box="0 0 16 16"><path d="M1.500 3h12v9h-12zM7.500 1v4M7.500 10v4M0 7.500h4M11 7.500h4M6 7.500h3" /><path d="M10 13h6l-3 3z" fill="currentColor" stroke="none" /></Glyph>
      </IconButton>
      <IconButton aria-label="Masken" $active>
        <Glyph size={16}><path d="M2 13.500L5 4l4-2h5v11.500z" /><path d="M1 12.500h2v2H1zM13 12.500h2v2h-2zM13 1h2v2h-2zM4 3h2v2H4z" fill="currentColor" stroke="none" /></Glyph>
      </IconButton>
      <TimeReadout>0:00:00:13</TimeReadout>
      <IconButton aria-label="Schnappschuss" $w={16}><FaCamera size={13} /></IconButton>
      <IconButton aria-label="Schnappschuss anzeigen" $w={18}>
        <Glyph size={15} color="#3f3f3f"><circle cx="6" cy="10" r="4" strokeWidth="2" /><circle cx="12" cy="4" r="2.500" strokeWidth="2" /></Glyph>
      </IconButton>
      <IconButton aria-label="Kanäle" $w={18}>
        <Glyph size={15}><circle cx="7" cy="4.500" r="3.500" fill="#e02222" stroke="none" /><circle cx="4.500" cy="9.500" r="3.500" fill="#2aa52a" stroke="none" /><circle cx="10.500" cy="9.500" r="3.500" fill="#3a62e0" stroke="none" /><path d="M8.500 13h6l-3 3z" fill="currentColor" stroke="none" /></Glyph>
      </IconButton>
      <Select label="Auflösung" value="Voll" w={88} h={20} />
      <IconButton aria-label="Relevanter Bereich" $w={18}>
        <Glyph size={14}><rect x="1.500" y="1.500" width="13" height="13" /><rect x="5" y="5" width="6" height="6" fill="currentColor" /></Glyph>
      </IconButton>
      <IconButton aria-label="Transparenzraster" $w={18}>
        <Glyph size={14}><rect x="1.500" y="1.500" width="13" height="13" /><path d="M5 5h3v3H5zM11 5h3v3h-3zM8 8h3v3H8zM2 8h3v3H2zM5 11h3v3H5zM8 2h3v3H8zM11 11h3v3h-3z" fill="#777" stroke="none" /></Glyph>
      </IconButton>
      <Select label="3D-Ansicht" value="Aktive Kamera" w={104} h={20} />
      <Select label="Ansichten" value="1 Ansicht" w={70} h={20} />
      <IconButton aria-label="Pixel-Seitenverhältnis" $w={16}>
        <Glyph size={15}><path d="M0 4h16M3 1.500L.5 4 3 6.500M13 1.500L15.500 4 13 6.500M4 8.500h8V15H4z" /></Glyph>
      </IconButton>
      <IconButton aria-label="Schnelle Vorschau" $w={20}>
        <Glyph size={15}><path d="M9 15H1.500V1.500h13V10M9 3.500L5.500 8.500H9l-2 4" strokeWidth="1.500" /><path d="M10 12h6l-3 3z" fill="currentColor" stroke="none" /></Glyph>
      </IconButton>
      <IconButton aria-label="Zeitleiste" $w={16}>
        <Glyph size={14}><path d="M1 4v10.500h14V4M4.500 8v3M8 1v10M11.500 8v3M11.500 2h3" /></Glyph>
      </IconButton>
      <IconButton aria-label="Flussdiagramm" $w={18}><FaSitemap size={13} /></IconButton>
      <Divider />
      <IconButton aria-label="Belichtung zurücksetzen" $w={16}><Aperture size={14} strokeWidth={3} /></IconButton>
      <HotText>+0,0</HotText>
    </CompFooter>
  </Panel>
);

const SizeIcon = () => (
  <Glyph w={18} h={15} box="0 0 18 15"><path d="M7.500 3.500V1.500h10v2M12.500 1.500v12M10.500 13.500h4" strokeWidth="2" /><path d="M1 8V6.500h6V8M4 6.500v7M3 13.500h2" /></Glyph>
);
const KernIcon = () => (
  <Glyph w={18} h={16} box="0 0 18 16"><path d="M1 2l3 8 3-8M7.500 12L11 1M9.500 10l3-8 3 8M10.500 7.500h4M9 14h7M11 12l-2 2 2 2" /></Glyph>
);
const LeadIcon = () => (
  <Glyph w={17} h={18} box="0 0 17 18"><path d="M8 7.500l2.500-6.500L13 7.500M9 5.500h3M8 16l2.500-6.500L13 16M9 14h3M6 8.500h10M6 17.500h10M3 7v9M1 9l2-2 2 2M1 14l2 2 2-2" /></Glyph>
);
const TrackingIcon = () => (
  <Glyph w={18} h={16} box="0 0 18 16"><path d="M0 0h18v11H0z" fill="#a6a6a6" stroke="none" /><path d="M2 2l3 7 3-7M9.500 9.500l3-7.500 3 7.500M10.500 7h4" stroke="#222" strokeWidth="1.600" /><path d="M1 14h16M3 12l-2 2 2 2M15 12l2 2-2 2" /></Glyph>
);
const TallIcon = () => (
  <Glyph w={18} h={15} box="0 0 18 15"><path d="M7.500 4V1.500h10V4M12.500 1.500v12M10.500 13.500h4" strokeWidth="2" /><path d="M3 1v13M1 3l2-2 2 2M1 12l2 2 2-2" /></Glyph>
);
const WideIcon = () => (
  <Glyph w={18} h={17} box="0 0 18 17"><path d="M4 4V1.500h10V4M9 1.500v9M7 10.500h4" strokeWidth="2" /><path d="M1 14.500h16M3 12.500l-2 2 2 2M15 12.500l2 2-2 2" /></Glyph>
);
const ShiftIcon = () => (
  <Glyph w={17} h={15} box="0 0 17 15"><path d="M1 10l3.500-9L8 10M2.500 7h4M0 11.500h9M10 8.500h6M13 14.500v-4M11 12l2-2 2 2M11 3c1.500-1 3-.8 3 1v3M14 4.800c-2 0-3.500.3-3.300 1.500.3 1.200 2.500.8 3.300-.5" strokeWidth="1.100" /></Glyph>
);
const TsumeIcon = () => (
  <Glyph w={16} h={16} box="0 0 16 16"><path d="M2.500 1v10M13.500 1v10" strokeDasharray="1 1.500" /><path d="M5 3h6M7.500 1.500v8M10 4.500c-1 3-3 5-5 4 0-3 6-4 6-1.500 0 1.500-1 2-2.500 2M1 14h4M3.500 12.500L5 14l-1.500 1.500M15 14h-4M12.500 12.500L11 14l1.500 1.500" strokeWidth="1" /></Glyph>
);

const CharacterPanel = () => (
  <CharacterBody>
    <FontPickers>
      <PickerColumn>
        <Select label="Schriftfamilie" value="Avenir" w={122} split />
        <Select label="Schriftschnitt" value="Black Oblique" w={122} split />
      </PickerColumn>
      <PickerColumn>
        <Glyph size={18}><path d="M1 15l1-3 6.500-6.500 2 2L4 14zM9 3.500l2-2.500c2-1 4.500 1 4 3.500L12.500 7z" /><path d="M7.500 4l4.500 4.500M9.500 4l2-2.500c2-1 4 1 3.500 3L12.500 6.500z" fill="currentColor" strokeWidth="1.600" /></Glyph>
        <Glyph w={20} h={17} box="0 0 20 17" stroke="none"><rect width="20" height="17" fill="#999" /><rect x="1" y="1" width="18" height="7" fill="#000" /><rect x="1" y="10" width="18" height="6" fill="#fff" /></Glyph>
      </PickerColumn>
      <Glyph w={44} h={44} box="0 0 44 44" strokeWidth="1">
        <rect x="13.500" y="13.500" width="29" height="29" fill="#fff" stroke="#000" />
        <rect x="22.500" y="22.500" width="11" height="11" fill="#3a3a3a" stroke="#000" />
        <path d="M14 42L42 14" stroke="#b01818" strokeWidth="1.600" />
        <rect x=".5" y=".5" width="29" height="29" fill="#fff" stroke="#000" />
        <rect x="1.500" y="31.500" width="10" height="10" fill="#fff" stroke="#666" />
        <path d="M2 41l9-9" stroke="#b01818" />
        <path d="M32 4.500c5-1 7 1.500 7 5.500" strokeWidth="2.200" stroke="#a6a6a6" />
        <path d="M30.500 4.500l4-3v6zM36 9h6l-3 4z" fill="#a6a6a6" stroke="none" />
      </Glyph>
    </FontPickers>
    <MetricGrid $top={2}>
      <SizeIcon /><Unit><HotText $strong>130</HotText>Px</Unit><Caret aria-label="Schriftgrad">▼</Caret>
      <LeadIcon /><HotText $strong>Auto</HotText><Caret $end aria-label="Zeilenabstand">▼</Caret>
      <KernIcon /><HotText $strong>Metrik</HotText><Caret aria-label="Kerning">▼</Caret>
      <TrackingIcon /><HotText $strong>0</HotText><Caret $end aria-label="Laufweite">▼</Caret>
    </MetricGrid>
    <StrokeRow>
      <Glyph w={15} h={12} box="0 0 15 12"><path d="M0 1h15M0 5.500h15" strokeWidth="1.500" /><path d="M0 10.500h15" strokeWidth="2.500" /></Glyph>
      <Unit><HotText $strong>-</HotText>Px</Unit>
      <Caret aria-label="Konturbreite">▼</Caret>
      <Select label="Konturart" value="" />
    </StrokeRow>
    <MetricGrid $top={5}>
      <TallIcon /><Unit><HotText $strong>100</HotText>%</Unit><Caret aria-label="Vertikal skalieren">▼</Caret>
      <WideIcon /><Unit><HotText $strong>100</HotText>%</Unit><Caret $end aria-label="Horizontal skalieren">▼</Caret>
      <ShiftIcon /><Unit><HotText $strong>0</HotText>Px</Unit><Caret aria-label="Grundlinienversatz">▼</Caret>
      <TsumeIcon /><Unit><HotText $strong>0</HotText>%</Unit><Caret $end aria-label="Tsume">▼</Caret>
    </MetricGrid>
    <StyleRow>
      <StyleButton $w={24}>T</StyleButton>
      <StyleButton $w={24} $italic $light>T</StyleButton>
      <StyleButton $w={26} $active $light>TT</StyleButton>
      <StyleButton $w={26} $light>T<small>T</small></StyleButton>
      <StyleButton $w={25} $light $script="flex-start">T<small>1</small></StyleButton>
      <StyleButton $w={22} $light $script="flex-end">T<small>1</small></StyleButton>
    </StyleRow>
  </CharacterBody>
);

const Side = () => (
  <SideColumn>
    {['Info', 'Audio', 'Vorschau', 'Effekte und Vorgaben', 'Ausrichten', 'Bibliotheken'].map((title) => (
      <Drawer key={title}>{title}</Drawer>
    ))}
    <Drawer $open>Zeichen <Burger /></Drawer>
    <CharacterPanel />
    <Drawer>Absatz</Drawer>
    <Drawer>Tracker</Drawer>
  </SideColumn>
);

const switchIcons = [<Shy />, <Sun />, <Slash />, <Fx>fx</Fx>];

const PropertyValues = ({ type }) => {
  switch (type) {
    case undefined:
      return <Values />;
    case 'opacity':
      return <Values><HotText $strong $expression>100</HotText>%</Values>;
    case 'add':
      return <Values><AddMenu>Hinzufügen: <PlayDot /></AddMenu></Values>;
    case 'mode':
      return <Values><Select label="Füllmethode" value="Normal" w={216} h={16} /></Values>;
    case 'direction':
      return (
        <Values $gap={2}>
          <IconButton $w={16} $h={15} $active aria-label="Pfadrichtung umkehren aus">
            <Glyph w={15} h={12} box="0 0 15 12"><path d="M3 2.500h9M1 1h2v3H1zM12 1h2v3h-2zM2 9h12M5 7L2 9l3 2" /></Glyph>
          </IconButton>
          <IconButton $w={16} $h={15} aria-label="Pfadrichtung umkehren ein">
            <Glyph w={15} h={12} box="0 0 15 12"><path d="M3 2.500h9M1 1h2v3H1zM12 1h2v3h-2zM1 9h12M10 7l3 2-3 2" /></Glyph>
          </IconButton>
        </Values>
      );
    case 'size':
      return (
        <Values $pad={4}>
          <Cell $box />
          <OutlineName $gap={5}>
            <HotText $strong $expression>1121,9</HotText>,<HotText $strong $expression>223,7</HotText>
          </OutlineName>
        </Values>
      );
    case 'expression':
      return (
        <Values $pad={20} $gap={1} $top>
          <IconButton $w={16} $h={15} $active aria-label="Expression aktiv">
            <Glyph w={10} h={8} box="0 0 10 8"><path d="M0 1.500h10M0 6.500h10" strokeWidth="2" /></Glyph>
          </IconButton>
          <IconButton $w={16} $h={15} aria-label="Diagramm"><Graph /></IconButton>
          <IconButton $w={16} $h={15} aria-label="Pickwhip"><Spiral /></IconButton>
          <IconButton $w={16} $h={15} aria-label="Expressionsmenü"><PlayDot /></IconButton>
        </Values>
      );
    case 'reset':
      return (
        <Values $pad={5} $gap={82}>
          <HotText>Zurück</HotText>
          <HotText>Info...</HotText>
        </Values>
      );
    default:
      return <Values><HotText $strong>{type}</HotText></Values>;
  }
};

const Layer = ({ row }) => (
  <LayerRow $layer={row.layer} $selected={row.selected} $tall={row.tall}>
    <Flags>
      {row.eye && <Cell $box><Eye /></Cell>}
      {row.fx && <Cell><Fx>fx</Fx></Cell>}
      {row.keys && (
        <>
          <Cell><Glyph w={8} h={9} box="0 0 8 9"><path d="M8 0v9L1 4.500z" fill="currentColor" stroke="none" /></Glyph></Cell>
          <Cell><Glyph w={9} h={9} box="0 0 9 9"><path d="M4.500.8l3.700 3.700-3.700 3.700L.8 4.500z" /></Glyph></Cell>
          <Cell $color="#4d4d4d"><Glyph w={8} h={9} box="0 0 8 9"><path d="M0 0v9l7-4.500z" fill="currentColor" stroke="none" /></Glyph></Cell>
        </>
      )}
      {row.layer && (
        <>
          <Cell />
          <Cell $box />
          <Cell $box />
        </>
      )}
    </Flags>
    <Outline $level={row.level}>
      {row.open !== undefined && <Tri open={row.open} />}
      {row.layer ? (
        <>
          <OutlineName $gap={4}><Swatch $size={12} $color={row.color} /></OutlineName>
          <LayerNumber>{row.layer}</LayerNumber>
          {row.layer === 1 ? (
            <Glyph w={11} h={11} box="0 0 11 11"><path d="M1 3V1h9v2M5.500 1v9M4 10.300h3" strokeWidth="1.500" /></Glyph>
          ) : <FaStar size={11} />}
          <LayerName $selected={row.selected}>{row.name}</LayerName>
        </>
      ) : (
        <>
          {row.watch && (
            <Animators $leaf={row.open === undefined}>
              <Cell $color={row.watch === 'on' ? BLUE : undefined} $box={row.watch === 'on'}>
                {row.watch === 'on' ? <StopwatchOn /> : <Stopwatch />}
              </Cell>
              {row.graph && (
                <Cell $color={row.graph === 'on' ? BLUE : undefined} $box={row.graph === 'on'}><Graph /></Cell>
              )}
            </Animators>
          )}
          <OutlineName $gap={row.indent || 8}>{row.name}</OutlineName>
        </>
      )}
    </Outline>
    {row.layer ? (
      <Values $pad={4} $gap={1}>
        {switchIcons.map((icon, i) => (
          <Cell key={i} $box $color={i === 1 ? '#6e6e6e' : undefined}>{icon}</Cell>
        ))}
        <Cell />
        <Cell $box />
        <Cell $box />
        <Cell $box />
      </Values>
    ) : <PropertyValues type={row.values} />}
    <Parent $layer={row.layer}>
      {(row.layer || row.pick) && <Spiral />}
      {row.parent && <Select label={`Übergeordnet ${row.name}`} value={row.parent} h={16} />}
    </Parent>
  </LayerRow>
);

const LayerList = () => (
  <LayerPane>
    <LayerTools>
      <CurrentTime>
        0:00:00:13
        <small>00013 (25.00 fps)</small>
      </CurrentTime>
      <SearchBox>
        <Magnifier caret />
        <input aria-label="Ebenen durchsuchen" />
      </SearchBox>
      <ToolIcons $gap={9}>
        <IconButton $w={26} aria-label="Mini-Flussdiagramm">
          <Glyph size={17}><path d="M0 4h8v6h5M8 4h6" /><path d="M6 2.500h4v3H6zM12 2.500h4v3h-4zM12 8.500h4v3h-4zM11 13h5l-2.500 2.500z" fill="currentColor" stroke="none" /></Glyph>
        </IconButton>
        <IconButton $w={26} aria-label="3D-Entwurf">
          <Glyph size={18}><path d="M11 6l4.500 2.200v4.500L11 15l-4.500-2.300V8.200zM6.500 8.200L11 10.500l4.500-2.300M11 10.500V15M4 0v8M0 4h8M1.200 1.200l5.600 5.600M6.800 1.200L1.200 6.800" strokeWidth="1.100" /></Glyph>
        </IconButton>
        <ToolIcons>
          <IconButton $w={26} aria-label="Shy-Ebenen">
            <Glyph size={17}><path d="M0 8.500h16V14H0z" fill="#666" stroke="none" /><path d="M4 7a4 4 0 0 1 8 0zM3 7.500h10M8 3v9" strokeWidth="1.600" /></Glyph>
          </IconButton>
          <IconButton $w={26} aria-label="Frame-Überblendung"><Film /></IconButton>
          <IconButton $w={26} aria-label="Bewegungsunschärfe"><Blur /></IconButton>
        </ToolIcons>
        <IconButton $w={24} aria-label="Diagrammeditor">
          <Glyph size={17}><path d="M1 2.500h14.500V15H1zM4 0v4M8 0v4M12 0v4M1 7h4c3 0 3 6 6 6h4" /></Glyph>
        </IconButton>
      </ToolIcons>
    </LayerTools>
    <ColumnHead>
      <Flags>
        <Cell><Eye /></Cell>
        <Cell><FaVolumeUp size={12} /></Cell>
        <Cell><Glyph size={9}><circle cx="8" cy="8" r="7" fill="currentColor" /></Glyph></Cell>
        <Cell><FaLock size={11} /></Cell>
      </Flags>
      <HeadOutline>
        <FaTag size={12} transform="scale(-1 1)" />
        <span>Nr.</span>
        <span>Ebenenname</span>
      </HeadOutline>
      <Values $pad={4} $gap={1}>
        <Cell><Shy /></Cell>
        <Cell><Sun /></Cell>
        <Cell><Dashes /></Cell>
        <Cell><Fx>fx</Fx></Cell>
        <Cell><Film /></Cell>
        <Cell><Blur /></Cell>
        <Cell><HalfCircle /></Cell>
        <Cell><Cube /></Cell>
      </Values>
      <ParentHead>Übergeordnet und verknüpft</ParentHead>
    </ColumnHead>
    {layers.map((row) => <Layer key={row.name} row={row} />)}
    <LayerFooter>
      <IconButton $w={18} $h={16} $active aria-label="Ebenenschalter">
        <Glyph size={14}><path d="M1 9V1h8M4 12V4h8M7 7h8v8H7zM9 11h4" /></Glyph>
      </IconButton>
      <IconButton $w={18} $h={16} aria-label="Übertragungssteuerung">
        <Glyph size={14}><circle cx="6" cy="6" r="4.500" strokeWidth="1.600" /><path d="M8 7h7v8H8z" strokeWidth="1.600" /></Glyph>
      </IconButton>
      <IconButton $w={18} $h={16} aria-label="In/Out">
        <Glyph size={14}><path d="M6 0C3 0 5 7 1 8c4 1 2 8 5 8zM10 0c3 0 1 7 5 8-4 1-2 8-5 8z" fill="currentColor" stroke="none" /><path d="M8 0v16" strokeWidth="3" /></Glyph>
      </IconButton>
      <ModeButton>Schalter/Modi</ModeButton>
    </LayerFooter>
  </LayerPane>
);

const Beam = () => (
  <Glyph w={11} h={13} box="0 0 11 13">
    <path d="M2 1h7M2 12h7M5.500 1v11" stroke="#b9c2cc" strokeWidth="1.600" />
  </Glyph>
);

const Tracks = () => (
  <TrackPane>
    <Navigator>
      <NavHandle />
      <NavRange />
      <NavHandle $end />
      <NavRest />
    </Navigator>
    <TimeScale>
      {['0:00s', '01s', '02s', '03s', '04s', '05s'].map((mark) => (
        <TimeMark key={mark}><span>{mark}</span></TimeMark>
      ))}
    </TimeScale>
    <WorkArea />
    <CacheBar />
    {layers.map((row) => (
      <Track key={row.name} $tall={row.tall}>
        {row.clip && <Clip $color={row.clip[0]} $edge={row.clip[1]} />}
        {row.keyframe && <Keyframe $at={row.keyframe} />}
        {row.tall && 'title = thisComp.layer("Line1").sourceRectAtTime();padding = effect("Padding")("Schieberegler");[title.width + padding, title.height + padding]'}
        {!row.clip && !row.keyframe && !row.tall && <BeamMark><Beam /></BeamMark>}
      </Track>
    ))}
    <TrackFooter>
      <ZoomGroup>
        <Glyph w={11} h={6} box="0 0 11 6"><path d="M0 6l3-3 1.500 1L7 0l4 6z" fill="currentColor" stroke="none" /></Glyph>
        <Slider $w={44} $thumb={10} aria-label="Zeitzoom" min="0" max="100" defaultValue="98" />
        <Glyph w={17} h={10} box="0 0 17 10"><path d="M0 10l5-7 2 3 4-6 6 10z" fill="currentColor" stroke="none" /></Glyph>
      </ZoomGroup>
      <ScrollTrack $thumb={150} />
    </TrackFooter>
    <Playhead>
      <Glyph w={11} h={12} box="0 0 11 12"><path d="M0 0h11v6l-5.500 6L0 6z" fill={BLUE} stroke="none" /><path d="M5.500 6v6" stroke="#123" strokeWidth="1" /></Glyph>
    </Playhead>
  </TrackPane>
);

const Timeline = () => (
  <TimelinePanel>
    <Tabs>
      <Tab><Swatch $color="#a18a68" /> WKDA_Brand_Intro</Tab>
      <Tab $active>
        <Glyph w={6} h={6} box="0 0 7 7"><path d="M.5.5l6 6M6.500.5l-6 6" strokeWidth="1" /></Glyph>
        <Swatch $color="#a18a68" /> WKDA_19.0_Questions <Burger />
      </Tab>
    </Tabs>
    <TimelineBody>
      <LayerList />
      <Tracks />
      <EdgeStrip>
        <Glyph w={11} h={14} box="0 0 11 14"><path d="M0 0h11v9l-5.500 5L0 9z" fill="currentColor" stroke="none" /></Glyph>
        <Glyph w={14} h={13} box="0 0 14 13"><path d="M7 3h7v7H7z" fill="currentColor" stroke="none" /><path d="M1 9l6-8v6" /><circle cx="7" cy="9" r="3" fill="#232323" /></Glyph>
      </EdgeStrip>
    </TimelineBody>
  </TimelinePanel>
);

const App = () => (
  <>
    <GlobalStyle />
    <Screen>
      <SystemMenu />
      <TitleBar>
        <TrafficLight aria-label="Schließen" />
        <TrafficLight aria-label="Minimieren" />
        <TrafficLight aria-label="Vergrößern" />
        <WindowTitle>
          Adobe After Effects CC 2018 -
          <TitleRedaction $w={319} $h={23} />
        </WindowTitle>
      </TitleBar>
      <Tools />
      <Panels>
        <ProjectPanel />
        <EssentialGraphics />
        <CompositionPanel />
        <Side />
      </Panels>
      <Timeline />
    </Screen>
  </>
);

export default App;
